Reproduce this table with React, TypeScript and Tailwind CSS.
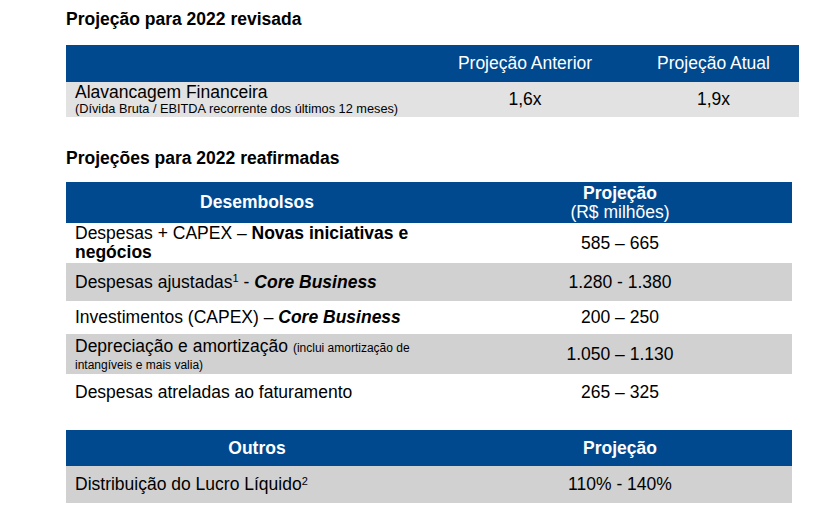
const BLUE = 'bg-[#00498f]'

type Row = {
  label: React.ReactNode
  value: string
  gray?: boolean
  h: string
}

const desembolsos: Row[] = [
  {
    label: (
      <>
        Despesas + CAPEX – <b>Novas iniciativas e negócios</b>
      </>
    ),
    value: '585 – 665',
    h: 'h-[40px]',
  },
  {
    label: (
      <>
        Despesas ajustadas<sup className="text-[11px]">1</sup> -{' '}
        <b className="italic">Core Business</b>
      </>
    ),
    value: '1.280 - 1.380',
    gray: true,
    h: 'h-[38px]',
  },
  {
    label: (
      <>
        Investimentos (CAPEX) – <b className="italic">Core Business</b>
      </>
    ),
    value: '200 – 250',
    h: 'h-[33px]',
  },
  {
    label: (
      <>
        <div className="leading-[19px]">
          Depreciação e amortização <span className="text-[12px]">(inclui amortização de</span>
        </div>
        <div className="text-[12px] leading-[14px]">intangíveis e mais valia)</div>
      </>
    ),
    value: '1.050 – 1.130',
    gray: true,
    h: 'h-[40px]',
  },
  {
    label: 'Despesas atreladas ao faturamento',
    value: '265 – 325',
    h: 'h-[37px]',
  },
]

function SectionTitle({ children, className }: { children: React.ReactNode; className: string }) {
  return <h2 className={`text-[17.5px] font-bold leading-5 text-black ${className}`}>{children}</h2>
}

export default function App() {
  return (
    <div
      className="h-[515px] w-[819px] bg-white pl-[66px] text-black"
      style={{ fontFamily: '"Liberation Sans", Arial, sans-serif' }}
    >
      <SectionTitle className="pt-[9px]">Projeção para 2022 revisada</SectionTitle>

      {/* revisada */}
      <div className="mt-4 w-[733px] text-[17.5px]">
        <div className={`flex h-[37px] items-center text-white ${BLUE}`}>
          <div className="w-[364px]" />
          <div className="w-[190px] text-center">Projeção Anterior</div>
          <div className="flex-1 pl-[8px] text-center">Projeção Atual</div>
        </div>
        <div className="flex h-[35px] items-center bg-[#e2e2e2]">
          <div className="w-[364px] pl-[9px]">
            <div className="leading-[18px]">Alavancagem Financeira</div>
            <div className="text-[12.75px] leading-[16px]">
              (Dívida Bruta / EBITDA recorrente dos últimos 12 meses)
            </div>
          </div>
          <div className="w-[190px] text-center">1,6x</div>
          <div className="flex-1 pl-[8px] text-center">1,9x</div>
        </div>
      </div>

      <SectionTitle className="mt-[31px]">Projeções para 2022 reafirmadas</SectionTitle>

      {/* reafirmadas */}
      <div className="mt-[14px] w-[726px] text-[17.5px]">
        <div className={`flex h-[41px] items-center text-white ${BLUE}`}>
          <div className="w-[382px] text-center font-bold">Desembolsos</div>
          <div className="flex-1 text-center leading-[19px]">
            <div className="font-bold">Projeção</div>
            <div>(R$ milhões)</div>
          </div>
        </div>
        {desembolsos.map((r, i) => (
          <div
            key={i}
            className={`flex items-center ${r.h} ${r.gray ? 'bg-[#d1d1d1]' : 'bg-white'}`}
          >
            <div className="w-[382px] pl-[9px] pr-6 leading-[19px]">{r.label}</div>
            <div className="flex-1 text-center">{r.value}</div>
          </div>
        ))}
      </div>

      {/* outros */}
      <div className="mt-[19px] w-[726px] text-[17.5px]">
        <div className={`flex h-[36px] items-center font-bold text-white ${BLUE}`}>
          <div className="w-[382px] text-center">Outros</div>
          <div className="flex-1 text-center">Projeção</div>
        </div>
        <div className="flex h-[37px] items-center bg-[#d1d1d1]">
          <div className="w-[382px] pl-[9px]">
            Distribuição do Lucro Líquido<sup className="text-[11px]">2</sup>
          </div>
          <div className="flex-1 text-center">110% - 140%</div>
        </div>
      </div>
    </div>
  )
}
